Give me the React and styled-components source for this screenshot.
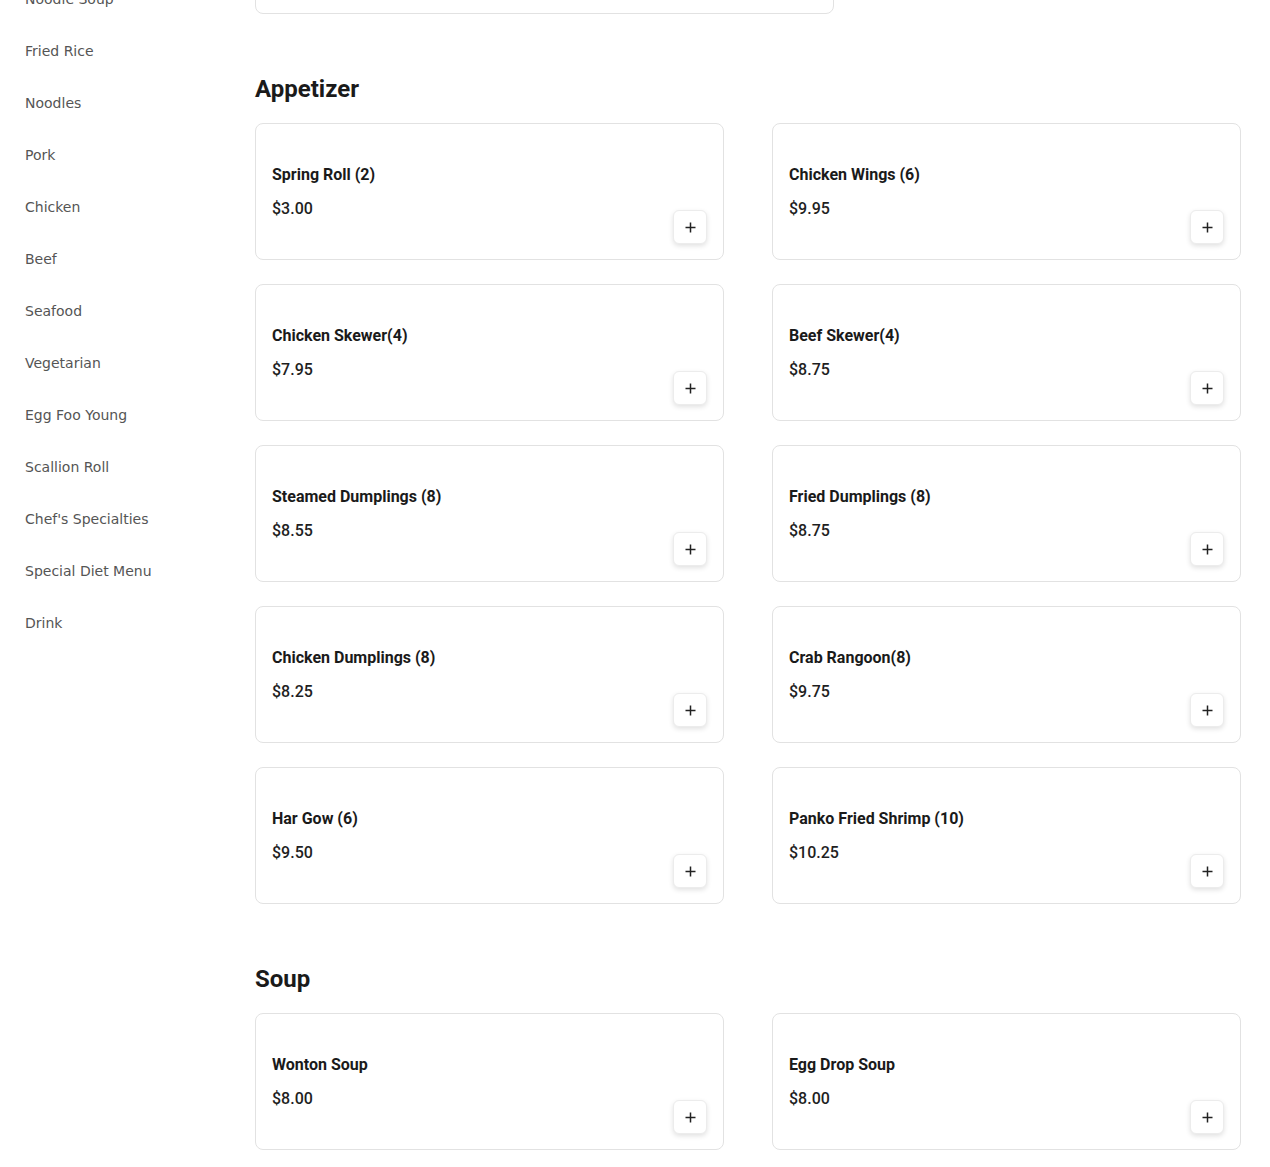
import React from "react"
import styled, { createGlobalStyle } from "styled-components"

const categorias = [
  "Appetizer", "Soup", "Noodle Soup", "Fried Rice", "Noodles", "Pork", "Chicken", "Beef",
  "Seafood", "Vegetarian", "Egg Foo Young", "Scallion Roll", "Chef's Specialties",
  "Special Diet Menu", "Drink",
]

const secoes = [
  {
    nome: "Appetizer",
    itens: [
      { nome: "Spring Roll (2)", preco: "$3.00" },
      { nome: "Chicken Wings (6)", preco: "$9.95" },
      { nome: "Chicken Skewer(4)", preco: "$7.95" },
      { nome: "Beef Skewer(4)", preco: "$8.75" },
      { nome: "Steamed Dumplings (8)", preco: "$8.55" },
      { nome: "Fried Dumplings (8)", preco: "$8.75" },
      { nome: "Chicken Dumplings (8)", preco: "$8.25" },
      { nome: "Crab Rangoon(8)", preco: "$9.75" },
      { nome: "Har Gow (6)", preco: "$9.50" },
      { nome: "Panko Fried Shrimp (10)", preco: "$10.25" },
    ],
  },
  {
    nome: "Soup",
    itens: [
      { nome: "Wonton Soup", preco: "$8.00" },
      { nome: "Egg Drop Soup", preco: "$8.00" },
    ],
  },
]

function Mais() {
  return (
    <svg width="11" height="11" viewBox="0 0 11 11" fill="none">
      <path d="M5.5 0.5v10M0.5 5.5h10" stroke="#222" strokeWidth="1.5" />
    </svg>
  )
}

export default function App() {
  return (
    <>
      <Global />
      <Pagina>
        <Lateral>
          {categorias.map((c) => (
            <ItemMenu key={c}>{c}</ItemMenu>
          ))}
        </Lateral>
        <Conteudo>
          <Aviso />
          {secoes.map((s) => (
            <Secao key={s.nome}>
              <Titulo>{s.nome}</Titulo>
              <Grade>
                {s.itens.map((item) => (
                  <Cartao key={item.nome}>
                    <Textos>
                      <Nome>{item.nome}</Nome>
                      <Preco>{item.preco}</Preco>
                    </Textos>
                    <Botao aria-label="add">
                      <Mais />
                    </Botao>
                  </Cartao>
                ))}
              </Grade>
            </Secao>
          ))}
        </Conteudo>
      </Pagina>
    </>
  )
}

const Global = createGlobalStyle`
  body{
    margin:0;
    background:#fff;
    overflow:hidden;
    font-family:Roboto, "Liberation Sans", sans-serif;
  }
`
const Pagina = styled.div`
  display:flex;
  margin-top:-160px;
`
const Lateral = styled.div`
  width:230px;
  flex-shrink:0;
  box-sizing:border-box;
  padding:29px 0 0 25px;
  display:flex;
  flex-direction:column;
`
const ItemMenu = styled.div`
  height:52px;
  display:flex;
  align-items:center;
  font-family:"DejaVu Sans", sans-serif;
  font-size:14px;
  color:#555;
`
const Conteudo = styled.div`
  flex:1;
  box-sizing:border-box;
  padding:24px 29px 40px 25px;
`
const Aviso = styled.div`
  width:579px;
  height:150px;
  box-sizing:border-box;
  border:1px solid #e2e2e2;
  border-radius:8px;
`
const Secao = styled.section`
  margin-top:59px;
`
const Titulo = styled.h2`
  margin:0 0 18px;
  font-size:24px;
  line-height:32px;
  font-weight:700;
  color:#1a1a1a;
`
const Grade = styled.div`
  display:grid;
  grid-template-columns:1fr 1fr;
  column-gap:48px;
  row-gap:24px;
`
const Cartao = styled.div`
  height:137px;
  box-sizing:border-box;
  border:1px solid #e2e2e2;
  border-radius:8px;
  padding:16px;
  display:flex;
  justify-content:space-between;
  align-items:center;
`
const Textos = styled.div`
  display:flex;
  flex-direction:column;
  gap:15px;
`
const Nome = styled.div`
  font-size:16px;
  line-height:19px;
  font-weight:700;
  color:#1a1a1a;
`
const Preco = styled.div`
  font-size:16px;
  line-height:19px;
  font-weight:500;
  color:#1f1f1f;
`
const Botao = styled.button`
  align-self:flex-end;
  width:34px;
  height:34px;
  padding:0;
  margin-bottom:-1px;
  background:#fff;
  border:1px solid #ececec;
  border-radius:6px;
  box-shadow:0 2px 5px rgba(0,0,0,0.12);
  display:flex;
  align-items:center;
  justify-content:center;
  cursor:pointer;
`
